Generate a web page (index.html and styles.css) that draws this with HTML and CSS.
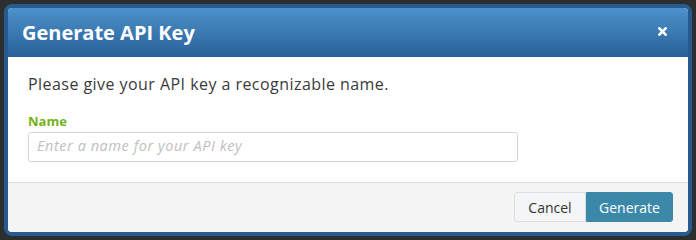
FILE: index.html
```html
<!DOCTYPE html>
<html lang="en">
<head>
<meta charset="utf-8">
<title>Generate API Key</title>
<link rel="stylesheet" href="styles.css">
</head>
<body>
<div class="modal">
  <div class="modal-header">
    <h3 class="modal-title">Generate API Key</h3>
    <button class="close" type="button" aria-label="Close">
      <svg width="9" height="9" viewBox="0 0 9 9"><path d="M1.4 1.4L7.6 7.6M7.6 1.4L1.4 7.6" stroke="#fff" stroke-width="2.6" stroke-linecap="square"/></svg>
    </button>
  </div>
  <div class="modal-body">
    <p class="intro">Please give your API key a recognizable name.</p>
    <label class="field-label" for="name">Name</label>
    <input class="field-input" id="name" type="text" placeholder="Enter a name for your API key">
  </div>
  <div class="modal-footer">
    <button class="btn btn-cancel" type="button">Cancel</button>
    <button class="btn btn-primary" type="button">Generate</button>
  </div>
</div>
</body>
</html>
```

FILE: styles.css
```css
html, body {
  margin: 0;
  padding: 0;
}
body {
  background: #2e2e2e;
  padding: 4px;
  font-family: "Open Sans", "Liberation Sans", sans-serif;
  width: 696px;
  height: 240px;
  box-sizing: border-box;
}
.modal {
  border: 4px solid #255b90;
  border-radius: 8px;
  background: #fff;
  overflow: hidden;
  height: 232px;
  box-sizing: border-box;
  display: flex;
  flex-direction: column;
}
.modal-header {
  height: 49px;
  flex: none;
  background: linear-gradient(#4c92cb, #2a6098);
  display: flex;
  align-items: center;
  justify-content: space-between;
  padding: 0 21px 0 14px;
  box-sizing: border-box;
}
.modal-title {
  margin: 0;
  color: #fff;
  font-size: 20px;
  font-weight: 700;
  line-height: 24px;
}
.close {
  background: none;
  border: 0;
  padding: 0;
  margin: 0;
  width: 9px;
  height: 9px;
  display: flex;
  margin-top: -2px;
}
.modal-body {
  padding: 17px 20px 0 20px;
  height: 125px;
  flex: none;
  box-sizing: border-box;
}
.intro {
  margin: 0;
  font-size: 16px;
  color: #3a3a3a;
  line-height: 20px;
  letter-spacing: 0.45px;
}
.field-label {
  display: block;
  margin-top: 19px;
  font-size: 13px;
  font-weight: 700;
  color: #74b21a;
  line-height: 16px;
}
.field-input {
  display: block;
  box-sizing: border-box;
  width: 490px;
  height: 30px;
  margin-top: 3px;
  border: 1px solid #d4d4d4;
  border-radius: 3px;
  padding: 0 8px 3px;
  font-family: inherit;
  font-size: 14.5px;
  letter-spacing: 0.55px;
  color: #333;
}
.field-input::placeholder {
  color: #c0c0c0;
  font-style: italic;
}
.modal-footer {
  flex: 1;
  background: #f4f4f4;
  border-top: 1px solid #dcdcdc;
  display: flex;
  justify-content: flex-end;
  align-items: flex-start;
  padding: 9px 15px 0 0;
}
.btn {
  height: 30px;
  font-family: inherit;
  font-size: 14px;
  border: 1px solid transparent;
  margin: 0;
  padding: 0;
}
.btn-cancel {
  background: #f4f5f6;
  border-color: #dddddd;
  color: #333;
  border-radius: 3px 0 0 3px;
  width: 72px;
}
.btn-primary {
  background: #3b88a9;
  border-color: #3b88a9;
  color: #fff;
  border-radius: 0 3px 3px 0;
  width: 87px;
}
```
